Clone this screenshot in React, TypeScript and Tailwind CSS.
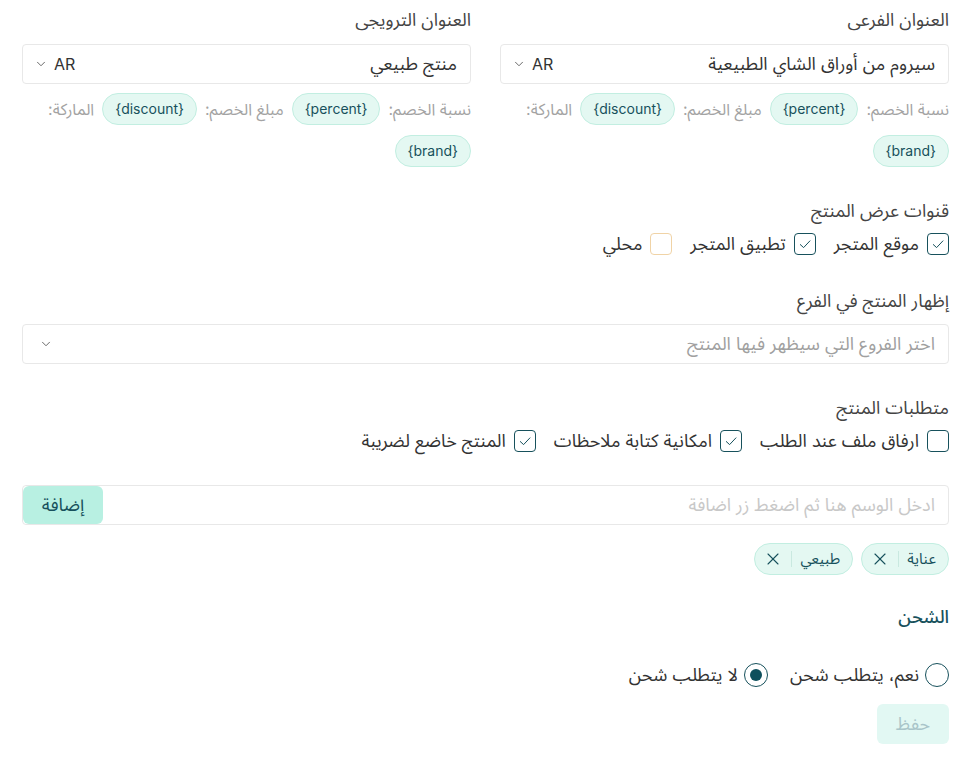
import { ChevronDown, X } from "lucide-react";

const teal = "text-[#17515c]";

function Chip({ children }: { children: React.ReactNode }) {
  return (
    <span className="inline-flex h-8 items-center rounded-full border border-[#c2eee1] bg-[#e4f8f2] px-3 text-sm text-[#17515c]">
      {children}
    </span>
  );
}

function Hint({ children }: { children: React.ReactNode }) {
  return <span className="text-base text-[#a3a3a3]">{children}</span>;
}

function Label({ children, className = "" }: { children: React.ReactNode; className?: string }) {
  return <div className={`h-6 text-lg leading-6 text-[#444] ${className}`}>{children}</div>;
}

function TitleField({ label, value }: { label: string; value: string }) {
  return (
    <div className="flex flex-col">
      <Label>{label}</Label>
      <div className="mt-3 flex h-10 items-center rounded border border-[#e8e8e8] pr-[13px] pl-[11px]">
        <span className="flex-1 text-lg text-[#333]">{value}</span>
        <span className="flex items-center gap-1.5 text-base text-[#333]" dir="ltr">
          <ChevronDown size={14} strokeWidth={1.5} className="text-[#555]" />
          AR
        </span>
      </div>
      <div className="mt-[9px] flex flex-wrap items-center gap-x-2 gap-y-2.5">
        <Hint>نسبة الخصم:</Hint>
        <Chip>{"{percent}"}</Chip>
        <Hint>مبلغ الخصم:</Hint>
        <Chip>{"{discount}"}</Chip>
        <Hint>الماركة:</Hint>
        <Chip>{"{brand}"}</Chip>
      </div>
    </div>
  );
}

function Check({ label, checked, tone }: { label: string; checked?: boolean; tone?: "warn" }) {
  return (
    <label className="flex h-6 items-center gap-2">
      <span
        className={
          tone === "warn"
            ? "grid size-[22px] place-items-center rounded border border-[#f0d3a6]"
            : "grid size-[22px] place-items-center rounded border border-[#17515c]"
        }
      >
        {checked && (
          <svg width="16" height="16" viewBox="0 0 16 16" fill="none">
            <path d="M3 8.3 6.6 11.6 13.2 4.6" stroke="#17515c" strokeWidth="1" />
          </svg>
        )}
      </span>
      <span className="text-lg leading-6 text-[#333]">{label}</span>
    </label>
  );
}

function Tag({ label }: { label: string }) {
  return (
    <span className="inline-flex h-8 items-center rounded-full border border-[#c2eee1] bg-[#e4f8f2] pr-3 pl-2 text-[15px] text-[#17515c]">
      <span>{label}</span>
      <span className="mx-2 h-4 w-px bg-[#c9e9e0]" />
      <X size={20} strokeWidth={1.3} />
    </span>
  );
}

function Radio({ label, checked }: { label: string; checked?: boolean }) {
  return (
    <label className="flex h-6 items-center gap-1.5">
      <span className="grid size-6 place-items-center rounded-full border-[1.5px] border-[#17515c]">
        {checked && <span className="size-3 rounded-full bg-[#0e4f5c]" />}
      </span>
      <span className="text-lg leading-6 text-[#333]">{label}</span>
    </label>
  );
}

export default function App() {
  return (
    <div
      dir="rtl"
      className="min-h-screen bg-white pt-2 pr-[15px] pl-[22px] font-['Inter','Noto_Sans_Arabic','DejaVu_Sans',sans-serif]"
    >
      <div className="grid grid-cols-2 gap-[29px]">
        <TitleField label="العنوان الفرعى" value="سيروم من أوراق الشاي الطبيعية" />
        <TitleField label="العنوان الترويجى" value="منتج طبيعي" />
      </div>

      <Label className="mt-[32px]">قنوات عرض المنتج</Label>
      <div className="mt-[9px] flex items-center gap-[18px]">
        <Check label="موقع المتجر" checked />
        <Check label="تطبيق المتجر" checked />
        <Check label="محلي" tone="warn" />
      </div>

      <Label className="mt-[33px]">إظهار المنتج في الفرع</Label>
      <div className="mt-[11px] flex h-10 items-center rounded border border-[#e8e8e8] pr-[13px] pl-4">
        <span className="flex-1 text-lg text-[#a0a0a0]">اختر الفروع التي سيظهر فيها المنتج</span>
        <ChevronDown size={14} strokeWidth={1.5} className="text-[#555]" />
      </div>

      <Label className="mt-[32px]">متطلبات المنتج</Label>
      <div className="mt-[9px] flex items-center gap-[18px]">
        <Check label="ارفاق ملف عند الطلب" />
        <Check label="امكانية كتابة ملاحظات" checked />
        <Check label="المنتج خاضع لضريبة" checked />
      </div>

      <div className="mt-[32px] flex h-10 items-stretch rounded border border-[#e8e8e8]">
        <span className="flex flex-1 items-center pr-[13px] text-lg text-[#c8c8c8]">
          ادخل الوسم هنا ثم اضغط زر اضافة
        </span>
        <button type="button" className={`w-20 rounded-md bg-[#b8f0e2] text-lg ${teal}`}>
          إضافة
        </button>
      </div>

      <div className="mt-[18px] flex items-center gap-2">
        <Tag label="عناية" />
        <Tag label="طبيعي" />
      </div>

      <div className={`mt-[30px] h-6 text-lg leading-6 font-medium ${teal}`}>الشحن</div>
      <div className="mt-[34px] flex items-center gap-[22px]">
        <Radio label="نعم، يتطلب شحن" />
        <Radio label="لا يتطلب شحن" checked />
      </div>

      <button
        type="button"
        className="mt-[17px] h-10 w-[72px] rounded-md bg-[#e2f8f3] text-lg text-[#a9c5c9]"
      >
        حفظ
      </button>
    </div>
  );
}
